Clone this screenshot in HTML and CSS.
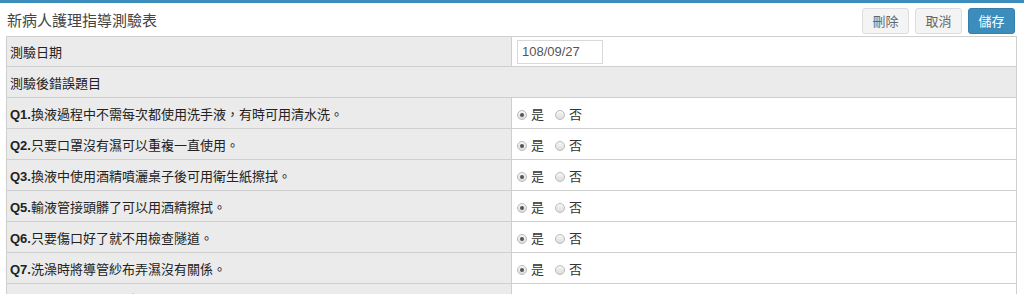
FILE: index.html
```html
<!DOCTYPE html>
<html lang="zh-Hant">
<head>
<meta charset="utf-8">
<link rel="stylesheet" href="styles.css">
</head>
<body>
<div class="topbar"></div>
<div class="header">
  <div class="title">新病人護理指導測驗表</div>
  <div class="actions">
    <button class="btn">刪除</button>
    <button class="btn">取消</button>
    <button class="btn btn-primary">儲存</button>
  </div>
</div>
<table class="form-table">
  <tr>
    <td class="label first">測驗日期</td>
    <td class="value first"><input class="date" type="text" value="108/09/27"></td>
  </tr>
  <tr>
    <td class="label section" colspan="2">測驗後錯誤題目</td>
  </tr>
  <tr>
    <td class="label"><b>Q1.</b>換液過程中不需每次都使用洗手液，有時可用清水洗。</td>
    <td class="value"><span class="radio checked"></span><span class="opt">是</span><span class="radio"></span><span class="opt">否</span></td>
  </tr>
  <tr>
    <td class="label"><b>Q2.</b>只要口罩沒有濕可以重複一直使用。</td>
    <td class="value"><span class="radio checked"></span><span class="opt">是</span><span class="radio"></span><span class="opt">否</span></td>
  </tr>
  <tr>
    <td class="label"><b>Q3.</b>換液中使用酒精噴灑桌子後可用衛生紙擦拭。</td>
    <td class="value"><span class="radio checked"></span><span class="opt">是</span><span class="radio"></span><span class="opt">否</span></td>
  </tr>
  <tr>
    <td class="label"><b>Q5.</b>輸液管接頭髒了可以用酒精擦拭。</td>
    <td class="value"><span class="radio checked"></span><span class="opt">是</span><span class="radio"></span><span class="opt">否</span></td>
  </tr>
  <tr>
    <td class="label"><b>Q6.</b>只要傷口好了就不用檢查隧道。</td>
    <td class="value"><span class="radio checked"></span><span class="opt">是</span><span class="radio"></span><span class="opt">否</span></td>
  </tr>
  <tr>
    <td class="label"><b>Q7.</b>洗澡時將導管紗布弄濕沒有關係。</td>
    <td class="value"><span class="radio checked"></span><span class="opt">是</span><span class="radio"></span><span class="opt">否</span></td>
  </tr>
  <tr>
    <td class="label"><b>Q8.</b>導管出口處有紅腫時可自行塗抹藥膏處理。</td>
    <td class="value"><span class="radio checked"></span><span class="opt">是</span><span class="radio"></span><span class="opt">否</span></td>
  </tr>
</table>
</body>
</html>
```
FILE: styles.css
```css
html, body {
  margin: 0;
  padding: 0;
  background: #fff;
  font-family: "Liberation Sans", "Noto Sans CJK TC", sans-serif;
  font-size: 13px;
  color: #333;
}
.topbar {
  height: 3px;
  background: #3c8dbc;
}
.header {
  display: flex;
  justify-content: space-between;
  align-items: center;
  height: 33px;
  padding: 0 9px 0 7px;
}
.title {
  font-size: 15px;
  color: #444;
  margin-top: -1px;
}
.actions {
  display: flex;
  gap: 6px;
  margin-top: 2px;
}
.btn {
  width: 47px;
  height: 26px;
  padding: 0;
  border: 1px solid #ddd;
  border-radius: 3px;
  background: #f4f4f4;
  color: #666;
  font-family: "Liberation Sans", "Noto Sans CJK TC", sans-serif;
  font-size: 13px;
}
.btn-primary {
  background: #3c8dbc;
  border-color: #367fa9;
  color: #fff;
}
.form-table {
  width: 1011px;
  margin-left: 6px;
  border-collapse: collapse;
  table-layout: fixed;
}
.form-table td {
  border: 1px solid #cfcfcf;
  height: 31px;
  padding: 0 4px;
  box-sizing: border-box;
  vertical-align: middle;
}
.form-table td.first {
  height: 30px;
}
.form-table td.label {
  width: 505px;
  background: #ebebeb;
  color: #222;
  padding-left: 3px;
}
.form-table td.value {
  background: #fff;
  padding-left: 5px;
}
.date {
  width: 86px;
  height: 24px;
  box-sizing: border-box;
  border: 1px solid #d9d9d9;
  padding: 0 4px;
  font-family: "Liberation Sans", sans-serif;
  font-size: 13px;
  color: #555;
  display: block;
}
.radio {
  display: inline-block;
  width: 10px;
  height: 10px;
  border-radius: 50%;
  border: 1px solid #bbb;
  box-sizing: border-box;
  background: linear-gradient(#f7f7f7, #dcdcdc);
  vertical-align: -1px;
  position: relative;
}
.radio.checked::after {
  content: "";
  position: absolute;
  left: 2px;
  top: 2px;
  width: 4px;
  height: 4px;
  border-radius: 50%;
  background: #555;
}
.opt {
  margin-left: 4px;
  margin-right: 11px;
}
```
